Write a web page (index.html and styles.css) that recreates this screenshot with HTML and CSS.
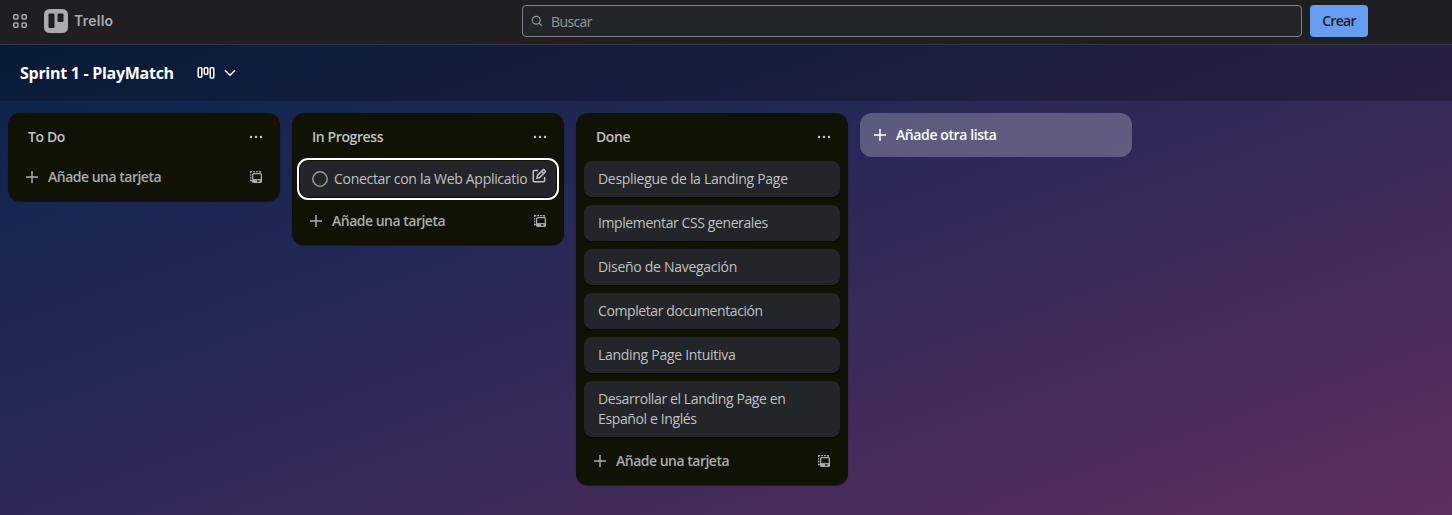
FILE: index.html
```html
<!DOCTYPE html>
<html lang="es">
<head>
<meta charset="utf-8">
<title>Sprint 1 - PlayMatch | Trello</title>
<link rel="stylesheet" href="styles.css">
</head>
<body>
<svg class="defs" aria-hidden="true">
  <symbol id="plus" viewBox="0 0 16 16"><path d="M8 2v12M2 8h12" fill="none" stroke="currentColor" stroke-width="1.5"/></symbol>
  <symbol id="more" viewBox="0 0 16 16"><g fill="currentColor"><circle cx="3" cy="8" r="1.25"/><circle cx="8" cy="8" r="1.25"/><circle cx="13" cy="8" r="1.25"/></g></symbol>
  <symbol id="template" viewBox="0 0 16 16"><g fill="none" stroke="currentColor"><rect x="4.6" y="4.6" width="8.8" height="8.8" rx="1.2" stroke-width="1.3"/><path d="M5 10.7h8.4" stroke-width="1.2"/><path d="M4.4 11.6H2.6v-1.2M2.6 9.4V7.8M2.6 6.8V5.2M2.6 4.3V2.6h1.6M5.2 2.6h1.8M8 2.6h1.8M10.8 2.6h1.4v1.4" stroke-width="1.2"/></g><path d="M5 10.7h4v2.6H5zM11.4 10.7h1.9v2.6h-1.9z" fill="currentColor"/></symbol>
</svg>
<header class="topbar">
  <svg class="apps" viewBox="0 0 16 16"><g fill="none" stroke="currentColor" stroke-width="1.5"><rect x="1.75" y="1.75" width="4.2" height="4.2" rx="1"/><rect x="10.05" y="1.75" width="4.2" height="4.2" rx="1"/><rect x="1.75" y="10.05" width="4.2" height="4.2" rx="1"/><rect x="10.05" y="10.05" width="4.2" height="4.2" rx="1"/></g></svg>
  <svg class="logo" viewBox="0 0 24 24"><rect width="24" height="24" rx="5.5" fill="#a9abaf"/><rect x="4.5" y="4.5" width="6" height="14.5" rx="1" fill="#1f1f21"/><rect x="13.5" y="4.5" width="6" height="8.5" rx="1" fill="#1f1f21"/></svg>
  <span class="brand">Trello</span>
  <div class="search">
    <svg viewBox="0 0 16 16"><g fill="none" stroke="currentColor" stroke-width="1.6"><circle cx="7" cy="7" r="5.2"/><path d="M10.8 10.8 14.5 14.5"/></g></svg>
    <span class="placeholder">Buscar</span>
  </div>
  <button class="create">Crear</button>
</header>
<section class="boardbar">
  <h1>Sprint 1 - PlayMatch</h1>
  <svg class="view" viewBox="0 0 18 14"><g fill="none" stroke="currentColor" stroke-width="1.5"><rect x="1.2" y="1.75" width="3.6" height="9.5" rx="1"/><rect x="7.2" y="1.75" width="3.6" height="6.5" rx="1"/><rect x="13.2" y="1.75" width="3.6" height="10.3" rx="1"/></g></svg>
  <svg class="chevron" viewBox="0 0 12 8"><path d="M1 1.2 6 6.2 11 1.2" fill="none" stroke="currentColor" stroke-width="1.5"/></svg>
</section>
<main class="board">
  <section class="list">
    <div class="head"><h2>To Do</h2><svg class="ico"><use href="#more"/></svg></div>
    <div class="foot"><svg class="ico"><use href="#plus"/></svg><span class="add">Añade una tarjeta</span><svg class="ico"><use href="#template"/></svg></div>
  </section>
  <section class="list">
    <div class="head"><h2>In Progress</h2><svg class="ico"><use href="#more"/></svg></div>
    <div class="cards">
      <div class="card focused">
        <svg class="check" viewBox="0 0 16 16"><circle cx="8" cy="8" r="7.2" fill="none" stroke="currentColor" stroke-width="1.5"/></svg>
        <span class="name">Conectar con la Web Applicatio</span>
        <svg class="edit" viewBox="0 0 16 16"><g fill="none" stroke="currentColor" stroke-width="1.5"><path d="M7 2.6H3.2a1 1 0 0 0-1 1v9.2a1 1 0 0 0 1 1h9.4a1 1 0 0 0 1-1V9"/><path d="M6 10.2 6.5 7.4 12 1.9a.8.8 0 0 1 1.1 0l1 1a.8.8 0 0 1 0 1.1L8.7 9.5zM10.6 3.5l2 2"/></g></svg>
      </div>
    </div>
    <div class="foot"><svg class="ico"><use href="#plus"/></svg><span class="add">Añade una tarjeta</span><svg class="ico"><use href="#template"/></svg></div>
  </section>
  <section class="list">
    <div class="head"><h2>Done</h2><svg class="ico"><use href="#more"/></svg></div>
    <div class="cards">
      <div class="card wide">Despliegue de la Landing Page</div>
      <div class="card">Implementar CSS generales</div>
      <div class="card wide">Diseño de Navegación</div>
      <div class="card">Completar documentación</div>
      <div class="card wide">Landing Page Intuitiva</div>
      <div class="card medium">Desarrollar el Landing Page en<br>Español e Inglés</div>
    </div>
    <div class="foot"><svg class="ico"><use href="#plus"/></svg><span class="add">Añade una tarjeta</span><svg class="ico"><use href="#template"/></svg></div>
  </section>
  <div class="newlist"><svg class="ico"><use href="#plus"/></svg><span>Añade otra lista</span></div>
</main>
</body>
</html>
```

FILE: styles.css
```css
* { box-sizing: border-box; }
body {
  margin: 0;
  height: 515px;
  overflow: hidden;
  display: flex;
  flex-direction: column;
  font: 14px/20px "Open Sans", "Noto Sans", sans-serif;
  letter-spacing: -0.4px;
  color: #bfc1c4;
  background: linear-gradient(to bottom right, #06244b 0%, #2b2957 48%, #5e2e60 100%);
}
svg { display: block; flex: none; }
.defs { position: absolute; width: 0; height: 0; }
h1, h2 { margin: 0; white-space: nowrap; }
.topbar {
  flex: none;
  height: 45px;
  padding: 0 84px 2px 12px;
  display: flex;
  align-items: center;
  background: #1f1f21;
  border-bottom: 1px solid #37383b;
  color: #a9abaf;
}
.apps { width: 16px; height: 16px; }
.logo { width: 24px; height: 24px; margin-left: 16px; }
.brand { margin-left: 6px; font: 600 14px/20px Inter, sans-serif; letter-spacing: 0.25px; }
.search {
  width: 780px;
  height: 32px;
  margin-left: auto;
  padding: 0 8px;
  display: flex;
  align-items: center;
  gap: 8px;
  border: 1px solid #7e8188;
  border-radius: 4px;
  background: #242528;
  color: #96999e;
}
.search svg { width: 12px; height: 12px; }
.placeholder { padding-top: 2px; letter-spacing: -0.6px; }
.create {
  width: 58px;
  height: 32px;
  margin-left: 8px;
  padding: 0;
  border: 0;
  border-radius: 4px;
  background: #669df1;
  color: #1f1f21;
  font: 600 14px/20px "Open Sans", sans-serif;
  letter-spacing: -0.7px;
}
.boardbar {
  flex: none;
  height: 56px;
  padding-left: 20px;
  display: flex;
  align-items: center;
  color: #fff;
  background: rgba(0, 0, 0, .24);
}
h1 { width: 154px; font-size: 16px; font-weight: 700; letter-spacing: -0.28px; }
.view { width: 18px; height: 14px; margin-left: 23px; }
.chevron { width: 12px; height: 8px; margin-left: 9px; }
.board { display: flex; align-items: flex-start; gap: 12px; padding: 12px 8px; }
.list {
  width: 272px;
  padding: 8px;
  border-radius: 12px;
  background: #101204;
  box-shadow: 0 1px 1px rgba(1, 4, 4, .5);
}
.head {
  height: 32px;
  padding: 0 8px 0 12px;
  display: flex;
  align-items: center;
  justify-content: space-between;
}
h2 { font-size: 14px; font-weight: 600; letter-spacing: -0.4px; }
.ico { width: 16px; height: 16px; }
.cards { display: flex; flex-direction: column; gap: 8px; padding-top: 8px; }
.card {
  min-height: 36px;
  padding: 8px 14px;
  border-radius: 8px;
  background: #242528;
  box-shadow: 0 1px 1px rgba(1, 4, 4, .5);
  white-space: nowrap;
}
.wide { letter-spacing: -0.29px; }
.medium { letter-spacing: -0.38px; }
.focused {
  display: flex;
  align-items: center;
  padding: 8px 9px 8px 12px;
  outline: 2px solid #fff;
  outline-offset: 1px;
}
.check { width: 16px; height: 16px; margin-right: 6px; color: #96999e; }
.name { width: 194px; letter-spacing: -0.3px; }
.edit { width: 16px; height: 16px; margin: -6px 0 0 3px; }
.foot {
  height: 32px;
  margin-top: 8px;
  padding: 0 8px;
  display: flex;
  align-items: center;
  color: #a9abaf;
}
.add { flex: 1; margin-left: 8px; font-weight: 600; letter-spacing: -0.5px; }
.newlist {
  width: 272px;
  height: 44px;
  padding: 0 12px;
  display: flex;
  align-items: center;
  gap: 8px;
  border-radius: 12px;
  background: rgba(255, 255, 255, .24);
  color: #fff;
  font-weight: 600;
}
```
